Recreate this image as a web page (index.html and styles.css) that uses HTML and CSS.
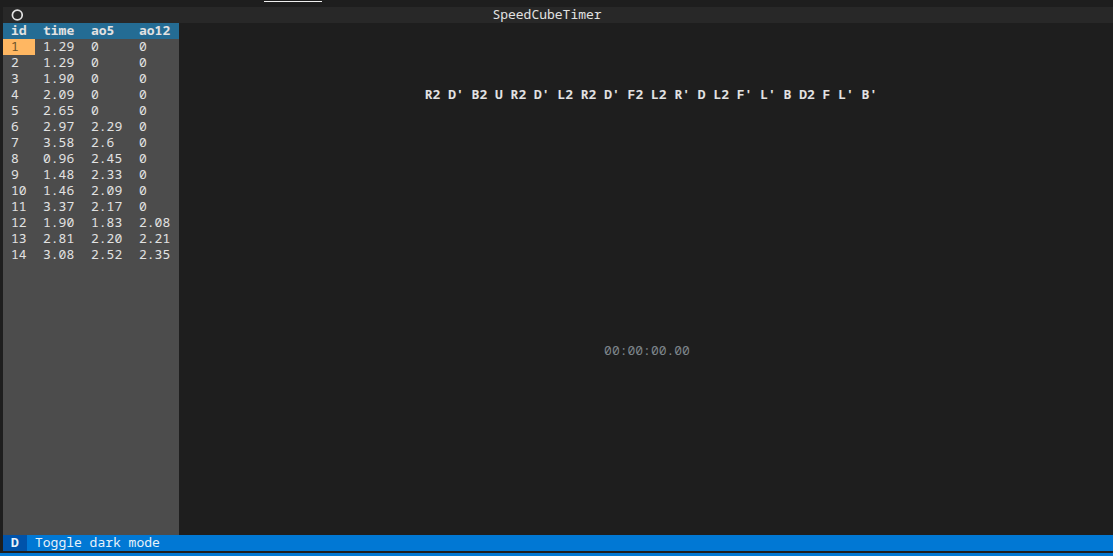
FILE: index.html
```html
<!DOCTYPE html>
<html lang="en">
<head>
<meta charset="utf-8">
<title>SpeedCubeTimer</title>
<link rel="stylesheet" href="styles.css">
</head>
<body>
<div class="tabs"><div class="tab-line"></div></div>
<div class="app">
  <header class="header">
    <button class="menu" aria-label="Menu"><svg width="12" height="12" viewBox="0 0 12 12"><circle cx="6.3" cy="6" r="4.9" fill="none" stroke="currentColor" stroke-width="1.7"/></svg></button>
    <h1 class="title">SpeedCubeTimer</h1>
  </header>
  <main class="main">
    <aside class="sidebar">
      <table class="times">
        <thead><tr><th class="id">id</th><th>time</th><th>ao5</th><th>ao12</th></tr></thead>
        <tbody>
          <tr><td class="cursor">1</td><td>1.29</td><td>0</td><td>0</td></tr>
          <tr><td>2</td><td>1.29</td><td>0</td><td>0</td></tr>
          <tr><td>3</td><td>1.90</td><td>0</td><td>0</td></tr>
          <tr><td>4</td><td>2.09</td><td>0</td><td>0</td></tr>
          <tr><td>5</td><td>2.65</td><td>0</td><td>0</td></tr>
          <tr><td>6</td><td>2.97</td><td>2.29</td><td>0</td></tr>
          <tr><td>7</td><td>3.58</td><td>2.6</td><td>0</td></tr>
          <tr><td>8</td><td>0.96</td><td>2.45</td><td>0</td></tr>
          <tr><td>9</td><td>1.48</td><td>2.33</td><td>0</td></tr>
          <tr><td>10</td><td>1.46</td><td>2.09</td><td>0</td></tr>
          <tr><td>11</td><td>3.37</td><td>2.17</td><td>0</td></tr>
          <tr><td>12</td><td>1.90</td><td>1.83</td><td>2.08</td></tr>
          <tr><td>13</td><td>2.81</td><td>2.20</td><td>2.21</td></tr>
          <tr><td>14</td><td>3.08</td><td>2.52</td><td>2.35</td></tr>
        </tbody>
      </table>
    </aside>
    <section class="stage">
      <p class="scramble">R2 D' B2 U R2 D' L2 R2 D' F2 L2 R' D L2 F' L' B D2 F L' B'</p>
      <div class="clock"><time>00:00:00.00</time></div>
    </section>
  </main>
  <footer class="footer"><button class="action"><kbd class="key">D</kbd><span class="label">Toggle dark mode</span></button></footer>
</div>
<div class="strip"></div>
</body>
</html>
```
FILE: styles.css
```css
* { box-sizing: border-box; }
body {
  margin: 0;
  min-height: 100vh;
  display: flex;
  flex-direction: column;
  background: #1e1e1e;
  color: #e2e2e2;
  font: 13px/15px "Noto Sans Mono", "Noto Mono", "DejaVu Sans Mono", monospace;
}
button { border: 0; padding: 0; background: none; color: inherit; font: inherit; }
.tabs { height: 7px; padding: 1px 0 0 264px; }
.tab-line { width: 58px; height: 1px; background: #f0f0f0; }
.app { flex: 1; display: flex; flex-direction: column; margin-left: 3px; }
.header { display: flex; height: 16px; padding-right: 78px; background: #282828; }
.menu { display: flex; align-items: center; width: 56px; padding-left: 8px; }
.title { flex: 1; margin: 0; font-size: 13px; font-weight: 400; text-align: center; }
.main { flex: 1; display: flex; }
.sidebar { width: 176px; background: #4c4c4c; }
.times { width: 100%; border-collapse: collapse; table-layout: fixed; }
.times th, .times td { height: 16px; padding: 0 0 0 8px; text-align: left; vertical-align: top; }
.times th { background: #246c94; }
.times .id { width: 32px; }
.times .cursor { background: #ffb762; color: #6b5329; }
.stage { flex: 1; display: flex; flex-direction: column; }
.scramble { margin: 64px 0 0 10px; font-weight: 700; text-align: center; }
.clock { flex: 1; padding-top: 241px; padding-left: 2px; color: #7e868c; text-align: center; }
.footer { display: flex; height: 16px; background: #0178d4; }
.action { display: flex; color: #e8f2fa; }
.key { width: 24px; height: 16px; background: #0053aa; font: inherit; font-weight: 700; text-align: center; }
.label { padding-left: 8px; }
.strip { height: 3px; margin-top: 2px; background: #0178d4; }
```
